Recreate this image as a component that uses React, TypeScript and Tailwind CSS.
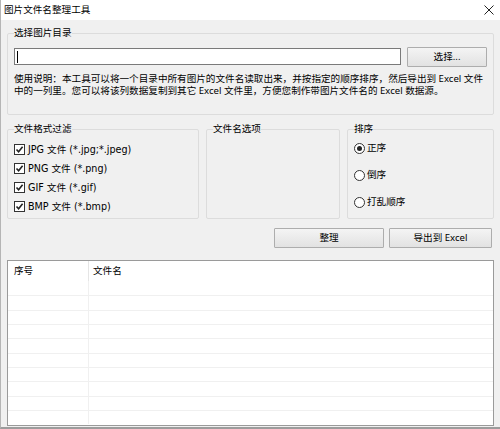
import React from "react";

const FONT = { fontFamily: '"Noto Sans", "Noto Sans CJK SC", sans-serif' };
const LATIN_WIDE = { fontFamily: '"DejaVu Sans", "Noto Sans CJK SC", sans-serif' };

function GroupBox({ title, className, children }: { title: string; className?: string; children?: React.ReactNode }) {
  return (
    <fieldset className={`border border-[#dcdcdc] rounded-[2px] px-[6px] ${className ?? ""}`}>
      <legend className="px-[0px] leading-[16px] text-[9.6px] text-black">{title}</legend>
      {children}
    </fieldset>
  );
}

function CheckBox({ label }: { label: string }) {
  return (
    <div className="flex items-center h-[19px] gap-[3px]">
      <span className="w-[11px] h-[11px] border border-[#333] bg-white flex items-center justify-center">
        <svg width="9" height="9" viewBox="0 0 9 9">
          <path d="M1.5 4.5 L3.6 6.8 L7.6 1.8" fill="none" stroke="#222" strokeWidth="1.6" />
        </svg>
      </span>
      <span style={LATIN_WIDE} className="text-[9.6px] leading-[12px] text-black">{label}</span>
    </div>
  );
}

function Radio({ label, checked }: { label: string; checked?: boolean }) {
  return (
    <div className="flex items-center h-[20px] gap-[2px]">
      <span className="w-[11px] h-[11px] rounded-full border border-[#333] bg-white flex items-center justify-center">
        {checked && <span className="w-[5px] h-[5px] rounded-full bg-[#222]" />}
      </span>
      <span className="text-[9.6px] leading-[12px] text-black">{label}</span>
    </div>
  );
}

function Button({ label, className }: { label: string; className?: string }) {
  return (
    <div
      className={`h-[20px] border border-[#adadad] bg-linear-to-b from-[#f4f4f4] to-[#e2e2e2] flex items-center justify-center text-[9.6px] text-black rounded-[1px] ${className ?? ""}`}
    >
      {label}
    </div>
  );
}

export default function App() {
  const rows = Array.from({ length: 10 });
  return (
    <div style={FONT} className="w-[500px] h-[429px] bg-[#f0f0f0] flex flex-col border-l border-[#b5b5b5] border-b-2 border-b-[#9c9c9c] overflow-hidden">
      <div className="h-[20px] bg-white flex items-center justify-between pl-[3px] pr-[6px] shrink-0">
        <span className="text-[9.6px] text-black">图片文件名整理工具</span>
        <svg width="10" height="10" viewBox="0 0 10 10">
          <path d="M0.5 0.5 L9.5 9.5 M9.5 0.5 L0.5 9.5" stroke="#222" strokeWidth="1" />
        </svg>
      </div>

      <div className="flex flex-col px-[6px]">
        <GroupBox title="选择图片目录" className="mt-[5px] pb-[17px]">
          <div className="flex items-start gap-[6px] mt-[6px]">
            <div className="flex-1 h-[17px] mt-[1px] border border-[#7a7a7a] bg-white flex items-center pl-[2px]">
              <span className="w-[1px] h-[12px] bg-black" />
            </div>
            <Button label="选择..." className="w-[80px]" />
          </div>
          <p className="mt-[6px] text-[9.6px] leading-[12px] text-black">
            使用说明：本工具可以将一个目录中所有图片的文件名读取出来，并按指定的顺序排序，然后导出到 Excel 文件中的一列里。您可以将该列数据复制到其它 Excel 文件里，方便您制作带图片文件名的 Excel 数据源。
          </p>
        </GroupBox>

        <div className="flex gap-[7px] mt-[6px]">
          <GroupBox title="文件格式过滤" className="w-[192px] pt-[3px] pb-[2px]">
            <CheckBox label="JPG 文件 (*.jpg;*.jpeg)" />
            <CheckBox label="PNG 文件 (*.png)" />
            <CheckBox label="GIF 文件 (*.gif)" />
            <CheckBox label="BMP 文件 (*.bmp)" />
          </GroupBox>
          <GroupBox title="文件名选项" className="w-[134px]" />
          <GroupBox title="排序" className="flex-1 pt-[1px] pb-[4px]">
            <div className="flex flex-col gap-[7px]">
              <Radio label="正序" checked />
              <Radio label="倒序" />
              <Radio label="打乱顺序" />
            </div>
          </GroupBox>
        </div>

        <div className="flex justify-end gap-[5px] mt-[9px] pr-[2px]">
          <Button label="整理" className="w-[110px]" />
          <Button label="导出到 Excel" className="w-[103px]" />
        </div>

        <div className="mt-[12px] h-[166px] border border-[#9a9a9a] bg-white flex flex-col overflow-hidden">
          <div className="h-[20px] flex shrink-0">
            <div className="w-[81px] border-r border-[#e5e5e5] pl-[6px] flex items-center text-[9.6px] text-black">序号</div>
            <div className="flex-1 pl-[4px] flex items-center text-[9.6px] text-black">文件名</div>
          </div>
          {rows.map((_, i) => (
            <div key={i} className={`h-[14.33px] flex shrink-0 ${i > 0 ? "border-t border-[#f0f0f0]" : ""}`}>
              <div className="w-[81px] border-r border-[#f0f0f0]" />
              <div className="flex-1" />
            </div>
          ))}
        </div>
      </div>
    </div>
  );
}
